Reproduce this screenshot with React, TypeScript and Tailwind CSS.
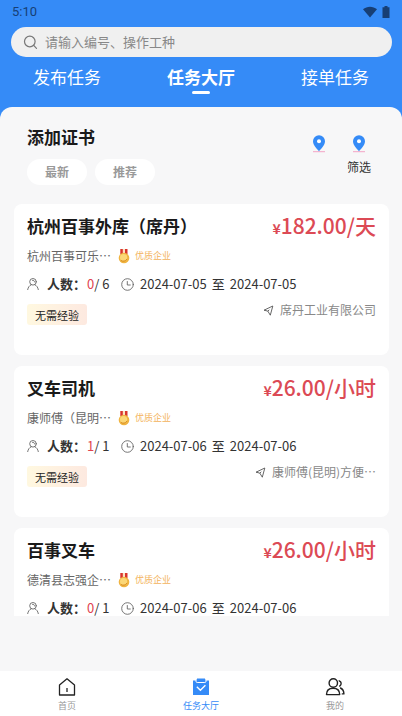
import { useState } from "react";

interface Job {
  id: number;
  title: string;
  company: string;
  price: string;
  joined: number;
  total: number;
  start: string;
  end: string;
  address: string;
}

const jobs: Job[] = [
  {
    id: 1,
    title: "杭州百事外库（席丹）",
    company: "杭州百事可乐⋯",
    price: "182.00/天",
    joined: 0,
    total: 6,
    start: "2024-07-05",
    end: "2024-07-05",
    address: "席丹工业有限公司",
  },
  {
    id: 2,
    title: "叉车司机",
    company: "康师傅（昆明⋯",
    price: "26.00/小时",
    joined: 1,
    total: 1,
    start: "2024-07-06",
    end: "2024-07-06",
    address: "康师傅(昆明)方便⋯",
  },
  {
    id: 3,
    title: "百事叉车",
    company: "德清县志强企⋯",
    price: "26.00/小时",
    joined: 0,
    total: 1,
    start: "2024-07-06",
    end: "2024-07-06",
    address: "",
  },
];

const tabs = ["发布任务", "任务大厅", "接单任务"];

function PinIcon() {
  return (
    <svg className="w-4 h-[18px]" viewBox="0 0 16 18" fill="none">
      <path d="M2 16.700h12" stroke="#f3a4c5" strokeWidth="1" />
      <path d="M8 16.200C5.400 13.200 2 9.800 2 6.200a6 6 0 0 1 12 0c0 3.600-3.400 7-6 10Z" fill="#358bf7" />
      <circle cx="8" cy="6.200" r="2" fill="#fff" />
    </svg>
  );
}

function MedalIcon() {
  return (
    <svg className="w-3 h-[15px]" viewBox="0 0 12 15">
      <path d="M2.300 0h2.600v5H2.300zM6.900 0h2.600v5H6.900z" fill="#d9342b" />
      <path d="M4.900 0h2v4h-2z" fill="#fbe3c0" />
      <circle cx="6" cy="9" r="5.300" fill="#f0b441" />
      <circle cx="5.600" cy="8.500" r="3.600" fill="#fbd777" />
      <path d="M3 11.500c2 1.200 4.500.8 6-1.500" stroke="#d98f24" strokeWidth="1" fill="none" />
    </svg>
  );
}

function PersonIcon() {
  return (
    <svg className="w-3 h-3" viewBox="0 0 12 12" fill="none" stroke="#666" strokeWidth="0.9" strokeLinecap="round">
      <circle cx="6" cy="3.800" r="3.300" />
      <path d="M5.500 2.300c1.200-.2 2 .5 2 1.600" />
      <path d="M4.300 6.700C2.300 7.600 1.100 9.300.7 11.600M7.700 6.700c2 .9 3.200 2.600 3.600 4.900" />
    </svg>
  );
}

function ClockIcon() {
  return (
    <svg className="w-[13px] h-[13px]" viewBox="0 0 13 13" fill="none" stroke="#666" strokeWidth="0.9" strokeLinecap="round">
      <circle cx="6.500" cy="6.500" r="5.800" />
      <path d="M6.300 3.500v3.500h3" />
    </svg>
  );
}

function SendIcon() {
  return (
    <svg className="w-[11px] h-[11px]" viewBox="0 0 11 11" fill="none" stroke="#555" strokeWidth="0.9" strokeLinejoin="round">
      <path d="M9.800 1 1 5.200l3.800.9 2.500 4.100L9.800 1Z" />
      <path d="M4.800 6.100 6.300 4.800" />
    </svg>
  );
}

function JobCard({ job }: { job: Job }) {
  return (
    <article className="h-[151px] shrink-0 rounded-lg bg-white px-[13px] pt-2">
      <div className="flex items-center justify-between h-7">
        <h2 className="text-[17px] leading-7 font-bold text-[#1a1a1a] whitespace-nowrap">{job.title}</h2>
        <p className="text-[21px] leading-7 font-medium text-[#dc4a55] whitespace-nowrap">
          <span className="text-[14px] font-bold">¥</span>
          {job.price}
        </p>
      </div>
      <div className="mt-2 flex items-center h-4">
        <span className="w-[91px] pr-2 text-[12px] leading-4 text-[#666] whitespace-nowrap">{job.company}</span>
        <MedalIcon />
        <span className="ml-[5px] text-[9px] leading-4 text-[#f3b35c]">优质企业</span>
      </div>
      <div className="mt-3 flex items-center h-4 text-[13px] leading-4 text-[#333] whitespace-nowrap">
        <PersonIcon />
        <span className="ml-2 w-10 font-bold">人数：</span>
        <span className="w-[34px]">
          <span className="text-[#e0434f]">{job.joined}</span>/ {job.total}
        </span>
        <ClockIcon />
        <span className="ml-[6px] flex gap-[5px]">
          <time>{job.start}</time>
          <span>至</span>
          <time>{job.end}</time>
        </span>
      </div>
      <div className="mt-3 flex items-start justify-between">
        <span className="h-[21px] rounded-[3px] bg-linear-to-r from-[#fff8e0] to-[#fde9e0] px-2 text-[11px] leading-[22px] text-[#222]">
          无需经验
        </span>
        {job.address && (
          <span className="flex items-center gap-[6px] text-[12px] leading-3 text-[#888]">
            <SendIcon />
            {job.address}
          </span>
        )}
      </div>
    </article>
  );
}

export default function App() {
  const [activeTab, setActiveTab] = useState(1);

  return (
    <div className="h-screen flex flex-col bg-[#358bf7] font-['Noto_Sans_CJK_SC',sans-serif]">
      <header className="shrink-0">
        <div className="flex items-center justify-between h-[27px] px-3 pb-1 text-[#173f75]">
          <span className="font-['Roboto',sans-serif] text-[13px] leading-4">5:10</span>
          <div className="flex items-center gap-1">
            <svg className="w-4 h-3" viewBox="0 0 16 12" fill="currentColor">
              <path d="M1 3.200C5-.2 11-.2 15 3.200L8 11.500Z" />
            </svg>
            <svg className="w-2 h-3" viewBox="0 0 8 12" fill="currentColor">
              <path d="M2.500 0h3v1.200H7.500V12h-7V1.200h2Z" />
            </svg>
          </div>
        </div>
        <label className="ml-[11px] mr-[10px] flex items-center gap-[7px] h-[30px] rounded-full bg-[#f0f0f0] px-3">
          <svg className="w-[15px] h-[15px] shrink-0" viewBox="0 0 15 15" fill="none" stroke="#777" strokeWidth="1.200" strokeLinecap="round">
            <circle cx="6.800" cy="6.500" r="5.300" />
            <path d="m10.700 10.400 2.800 2.900" />
          </svg>
          <input
            type="text"
            aria-label="搜索"
            placeholder="请输入编号、操作工种"
            className="min-w-0 flex-1 bg-transparent text-[13px] leading-5 text-[#333] outline-none placeholder:text-[#888]"
          />
        </label>
        <nav className="grid grid-cols-3 h-[50px] pt-2 text-white">
          {tabs.map((tab, index) => (
            <button
              key={tab}
              onClick={() => setActiveTab(index)}
              className={
                activeTab === index
                  ? "flex flex-col items-center text-[17px] leading-6 font-bold"
                  : "flex flex-col items-center text-[17px] leading-6"
              }
            >
              {tab}
              {activeTab === index && <span className="mt-[2px] h-[3px] w-[18px] rounded-full bg-white" />}
            </button>
          ))}
        </nav>
      </header>

      <main className="flex-1 min-h-0 flex flex-col rounded-t-xl bg-[#f7f7f8] pb-[55px]">
        <div className="flex justify-between pl-[27px] pr-[31px] pt-[18px] pb-[19px]">
          <div>
            <h1 className="text-[17px] leading-6 font-bold text-[#1a1a1a]">添加证书</h1>
            <div className="mt-[10px] flex gap-2">
              <button className="h-[26px] w-[60px] rounded-full bg-white text-[12px] leading-4 font-bold text-[#999]">最新</button>
              <button className="h-[26px] w-[60px] rounded-full bg-white text-[12px] leading-4 font-bold text-[#999]">推荐</button>
            </div>
          </div>
          <div className="flex items-start gap-4 pt-[10px]">
            <button aria-label="位置" className="w-6 flex flex-col items-center">
              <PinIcon />
            </button>
            <button className="w-6 flex flex-col items-center gap-[6px] text-[12px] leading-4 text-[#333]">
              <PinIcon />
              <span className="whitespace-nowrap">筛选</span>
            </button>
          </div>
        </div>
        <section className="flex-1 min-h-0 ml-[14px] mr-[13px] flex flex-col gap-[11px] overflow-hidden">
          {jobs.map((job) => (
            <JobCard key={job.id} job={job} />
          ))}
        </section>
      </main>

      <footer className="shrink-0 grid grid-cols-3 h-[45px] bg-white pt-[6px] text-[9px] leading-3 text-[#999]">
        <a href="#home" className="flex flex-col items-center gap-[3px]">
          <svg className="w-5 h-5" viewBox="0 0 20 20" fill="none" stroke="#222" strokeWidth="1.300" strokeLinejoin="round">
            <path d="M2.500 8 10 1.800 17.500 8v10h-15V8Z" />
            <path d="M10 11v4" />
          </svg>
          首页
        </a>
        <a href="#tasks" className="flex flex-col items-center gap-[3px] text-[#358bf7]">
          <svg className="w-5 h-5" viewBox="0 0 20 20" fill="none">
            <path d="M2 3.500h3.200v-1h9.600v1H18V18H2Z" fill="#358bf7" />
            <path d="M5 2.500v1.800q0 1.200 1.200 1.200h7.600q1.200 0 1.200-1.200V2.500" stroke="#fff" strokeWidth="1" />
            <path d="M6 1.500h8v2.800H6Z" fill="#358bf7" />
            <path d="m5.800 9.800 3.600 3.500 5-5" stroke="#fff" strokeWidth="1.400" />
          </svg>
          任务大厅
        </a>
        <a href="#mine" className="flex flex-col items-center gap-[3px]">
          <svg className="w-5 h-5" viewBox="0 0 20 20" fill="none" stroke="#222" strokeWidth="1.400" strokeLinecap="round" strokeLinejoin="round">
            <circle cx="8.300" cy="6" r="4.200" />
            <path d="M1.500 17.600c0-4.200 2.600-6.400 6.600-6.400s6.600 2.200 6.600 6.400H1.500Z" />
            <path d="M14.200 3.800c2.300.8 2.700 3.800.5 5.300M15.500 11c2.200 1.100 3.400 3.200 3.400 5.900h-1.600" />
          </svg>
          我的
        </a>
      </footer>
    </div>
  );
}
